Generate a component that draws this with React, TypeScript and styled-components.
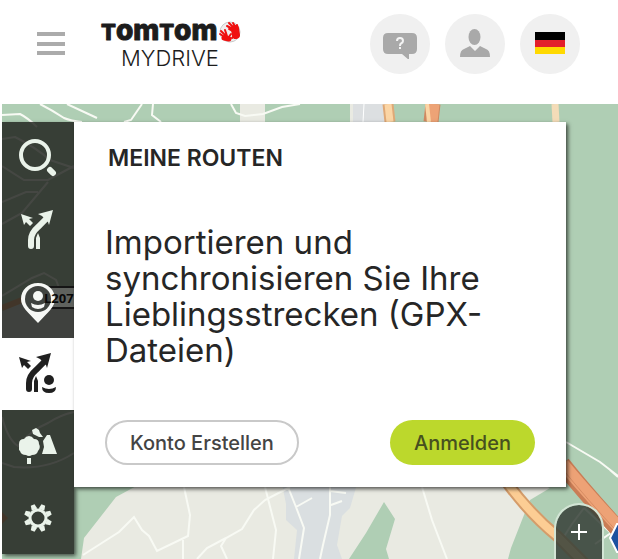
import React from "react";
import styled, { createGlobalStyle } from "styled-components";

const Global = createGlobalStyle`
  *, *::before, *::after { box-sizing: border-box; }
  body { margin: 0; background: #fff; font-family: Inter, "Open Sans", sans-serif; color: #262626; }
  button { font: inherit; color: inherit; border: 0; padding: 0; margin: 0; cursor: pointer; background: none; }
`;

const Page = styled.div`
  min-height: 100vh;
  display: flex;
  flex-direction: column;
`;

const Header = styled.header`
  height: 104px;
  padding: 14px 38px 0 36px;
  display: flex;
  align-items: flex-start;
`;

const MenuButton = styled.button`
  width: 30px;
  height: 60px;
  display: grid;
  place-items: center;
`;

const Brand = styled.a`
  margin-left: 34px;
  padding-top: 6px;
  display: flex;
  flex-direction: column;
  color: #1c1c1c;
  text-decoration: none;
`;

const Wordmark = styled.svg`
  display: block;
  overflow: visible;
  font-weight: 800;
`;

const Product = styled.span`
  padding-left: 21px;
  font-size: 22px;
  line-height: 28px;
  font-weight: 300;
`;

const HeaderActions = styled.div`
  margin-left: auto;
  display: flex;
  gap: 15px;
`;

const RoundButton = styled.button`
  width: 60px;
  height: 60px;
  border-radius: 50%;
  background: #f0f0f0;
  display: grid;
  place-items: center;
`;

const MapArea = styled.main`
  position: relative;
  flex: 1;
  margin-left: 2px;
  padding: 18px 52px 4px 0;
  overflow: hidden;
  display: flex;
  align-items: flex-start;
  background: #afceb4;
`;

const MapDrawing = styled.svg`
  position: absolute;
  inset: 0;
  width: 100%;
  height: 100%;
`;

const Sidebar = styled.nav`
  position: relative;
  flex: none;
  width: 72px;
  display: flex;
  flex-direction: column;
  background: rgba(28, 31, 26, 0.82);
  box-shadow: 2px 2px 4px rgba(0, 0, 0, 0.6);
`;

const SideItem = styled.button<{ $active?: boolean }>`
  position: relative;
  height: 72px;
  display: grid;
  place-items: center;
  color: ${(p) => (p.$active ? "#202020" : "#eaf3ea")};
  background: ${(p) => (p.$active ? "#fff" : "transparent")};
`;

const RoadLabel = styled.svg`
  position: absolute;
  right: 0;
  top: 20px;
  overflow: visible;
  font-family: "Open Sans", sans-serif;
`;

const SideIcon = styled.svg`
  position: relative;
  display: block;
`;

const Panel = styled.section`
  position: relative;
  flex: 1;
  min-width: 0;
  padding: 22px 31px;
  background: #fff;
  box-shadow: 2px 2px 4px rgba(0, 0, 0, 0.65);
`;

const Title = styled.h1`
  margin: 0 0 52px 3px;
  font-size: 23px;
  line-height: 28px;
  font-weight: 600;
`;

const Message = styled.p`
  margin: 0;
  font-size: 33px;
  line-height: 36px;
`;

const Actions = styled.div`
  margin-top: 52px;
  display: flex;
  justify-content: space-between;
`;

const PillButton = styled.button<{ $primary?: boolean }>`
  height: 45px;
  padding: 0 ${(p) => (p.$primary ? 24 : 23)}px;
  border-radius: 23px;
  border: ${(p) => (p.$primary ? "0" : "2px solid #c9c9c9")};
  background: ${(p) => (p.$primary ? "#bcd82c" : "#fff")};
  color: ${(p) => (p.$primary ? "#46501f" : "#444")};
  font-size: 20px;
  font-weight: 500;
  white-space: nowrap;
`;

const ZoomIn = styled.button`
  position: absolute;
  right: 14px;
  bottom: 0;
  width: 50px;
  height: 56px;
  border: 2px solid #d3e5d5;
  border-bottom: 0;
  border-radius: 25px 25px 0 0;
  background: rgba(55, 64, 56, 0.86);
  background-clip: padding-box;
  display: grid;
  place-items: center;
`;

function RouteArrows() {
  return (
    <g fill="currentColor">
      <path d="M10 36V30Q10 23 17 17L25 9" fill="none" stroke="currentColor" strokeWidth="6" strokeLinecap="round" />
      <path d="M32 0L17 4L21 6L27 12L28 15Z" />
      <path d="M0 4L12 8L8 9L12 13L9 16L5 12L3 15Z" />
      <path d="M15 39V28L17 23L19 28V39Z" />
    </g>
  );
}

const gearTeeth = [22.5, 67.5, 112.5, 157.5, 202.5, 247.5, 292.5, 337.5];

function BaseMap() {
  return (
    <MapDrawing viewBox="2 104 616 455" preserveAspectRatio="xMinYMin slice" aria-hidden="true">
      <rect x="2" y="104" width="616" height="455" fill="#afceb4" />
      <path d="M240 104H265V122H240ZM350 104H390V122H350Z" fill="#e9eae2" />
      <path d="M353 104H385L388 122H353Z" fill="#dcdfe1" />
      <path d="M364 104L363 122" stroke="#fff" fill="none" />
      <path d="M81 559L84 538L116 497L140 484H540L550 488L530 500L522 520L511 548L508 559Z" fill="#e9eae2" />
      <path d="M282 484H357L350 508L342 516L337 545L342 559H294L297 530L286 520V504Z" fill="#dadfe1" />
      <path d="M349 559L366 533L384 502L395 519L386 549L389 559Z" fill="#afceb4" />
      <g fill="none" stroke="#f8faf4" strokeWidth="2">
        <path d="M2 115L20 114Q28 118 37 127M40 104Q52 110 64 118Q71 121 82 122M67 104L97 118M142 104L131 120L124 122M153 104L152 115L161 122M231 104L236 113L245 116L263 114L282 107L300 104" />
        <path d="M83 555L119 532L134 517L142 530L149 536L157 551L188 536L190 515L184 487M183 540V559M197 559L207 548L226 538L242 529L254 510L265 500L290 487M226 538L221 546L227 559M265 487L276 530L273 559M288 487L296 507L304 528L299 559M296 507L312 498M330 487L330 515L323 545L320 559M330 491L346 493M331 505L342 501M422 487L432 520L447 559" />
        <path d="M566 442L600 462L618 476M610 470L618 477M595 544L618 528M584 508L610 532M584 508L572 524L563 538" />
      </g>
      <g fill="none" stroke="#fff" strokeWidth="2">
        <path d="M2 139L15 137Q35 147 50 160L74 168M2 166L24 180H48L74 166M2 202L26 192H38M2 224L22 213L48 182M2 296L32 278L44 273L56 280L61 293M2 417Q8 440 18 446Q31 430 48 423Q60 415 74 412M2 463L14 467Q48 470 74 453" />
      </g>
      <path d="M2 311L38 295L74 295V338H2Z" fill="#dddfe1" />
      <path d="M2 308L27 298L47 291" stroke="#e79c6d" strokeWidth="6" fill="none" />
      <path d="M2 512L8 518L2 524Z" fill="#e79c6d" />
      <path d="M388 104L390 122" stroke="#dfa977" strokeWidth="11" />
      <path d="M388 104L390 122" stroke="#fbd5a5" strokeWidth="7" />
      <path d="M433 104L431 122" stroke="#cf8961" strokeWidth="15" />
      <path d="M434 104L432 122" stroke="#eda376" strokeWidth="11" />
      <path d="M427 104L429 122" stroke="#fbd5a5" strokeWidth="4" />
      <path d="M555 104L556 122" stroke="#f4dcb8" strokeWidth="7" />
      <g fill="none">
        <path d="M505 480Q530 514 557 536L584 563" stroke="#d49c6a" strokeWidth="12" />
        <path d="M505 480Q530 514 557 536L584 563" stroke="#fccd94" strokeWidth="8" />
        <path d="M562 464Q586 494 628 540" stroke="#c97d56" strokeWidth="17" />
        <path d="M563 464Q587 493 628 537" stroke="#eda276" strokeWidth="12" />
        <path d="M561 467Q585 497 622 537" stroke="#d78c63" strokeWidth="1" />
      </g>
      <path d="M610 538L617 524H637L643 538L637 552H617Z" fill="#1c51a0" stroke="#fff" strokeWidth="2" />
    </MapDrawing>
  );
}

export default function App() {
  return (
    <Page>
      <Global />
      <Header>
        <MenuButton aria-label="Menü">
          <svg width="28" height="24" viewBox="0 0 28 24" fill="#ababab">
            <path d="M0 0H28V4H0ZM0 10H28V14H0ZM0 19H28V23H0Z" />
          </svg>
        </MenuButton>
        <Brand href="#">
          <Wordmark width="142" height="24" viewBox="0 0 142 24">
            <g fill="currentColor" stroke="currentColor" strokeWidth="1" strokeLinejoin="round">
              <text x="1" y="20" fontSize="22">T<tspan fontSize="28">om</tspan>T<tspan fontSize="28">om</tspan></text>
            </g>
            <circle cx="130" cy="12" r="10" fill="#efefef" stroke="#c9c9c9" />
            <g fill="none" stroke="#f01010" strokeLinecap="round">
              <path d="M120 14L126 18M121 11L127 17M125 10L127 16M131 14L128 18" strokeWidth="2" />
              <path d="M124 18L129 19" strokeWidth="5" />
              <path d="M135 9L136 15" strokeWidth="8" />
              <path d="M133 9L127 6M134 8L129 3M136 8L133 3M138 9L137 5M134 12L129 9M134 16L132 18" strokeWidth="2" />
            </g>
          </Wordmark>
          <Product>MYDRIVE</Product>
        </Brand>
        <HeaderActions>
          <RoundButton aria-label="Hilfe">
            <svg width="36" height="30" viewBox="0 0 36 30">
              <path d="M6 4H30Q35 4 35 9V20Q35 25 30 25H27V31L20 25H6Q1 25 1 20V9Q1 4 6 4Z" fill="#a9a9a9" />
              <path d="M15 12Q15 9 18 9Q21 9 21 12Q21 13.500 19 14.500Q18 15 18 17" fill="none" stroke="#f4f4f4" strokeWidth="2" />
              <rect x="17" y="18" width="2" height="2" fill="#f4f4f4" />
            </svg>
          </RoundButton>
          <RoundButton aria-label="Konto">
            <svg width="30" height="30" viewBox="0 0 30 30" fill="#a9a9a9">
              <ellipse cx="14.500" cy="8" rx="6" ry="8" />
              <path d="M0 28Q0 21 4 20L10 17L15 22L20 17L26 20Q30 21 30 28Z" />
            </svg>
          </RoundButton>
          <RoundButton aria-label="Deutsch">
            <svg width="30" height="24" viewBox="0 0 30 24">
              <path d="M0 0H30V8H0Z" fill="#000" />
              <path d="M0 8H30V15H0Z" fill="#e3202b" />
              <path d="M0 15H30V22H0Z" fill="#ffd900" />
            </svg>
          </RoundButton>
        </HeaderActions>
      </Header>
      <MapArea>
        <BaseMap />
        <Sidebar aria-label="Karte">
          <SideItem aria-label="Suchen">
            <SideIcon width="38" height="38" viewBox="0 0 38 38" fill="none" stroke="currentColor">
              <circle cx="16" cy="16" r="14" strokeWidth="4" />
              <path d="M31 31L34 34" strokeWidth="6" strokeLinecap="round" />
            </SideIcon>
          </SideItem>
          <SideItem aria-label="Route planen">
            <SideIcon width="34" height="40" viewBox="0 0 34 40">
              <RouteArrows />
            </SideIcon>
          </SideItem>
          <SideItem aria-label="Meine Orte">
            <RoadLabel width="38" height="26" viewBox="0 0 38 26">
              <path d="M38 1H3Q1 1 1 4V19Q1 22 4 22H38" fill="#5f625e" stroke="#151515" strokeWidth="2" />
            </RoadLabel>
            <SideIcon width="36" height="42" viewBox="0 0 36 42">
              <path d="M18 2C8 2 1 9 1 18C1 26 8 31 18 42C28 31 35 26 35 18C35 9 28 2 18 2Z" fill="#f6f8f5" />
              <circle cx="18" cy="18" r="13" fill="#3f433f" />
              <circle cx="18" cy="15" r="5" fill="#f6f8f5" />
              <path d="M11 22Q18 26 25 22L24 26Q18 30 12 26Z" fill="#f6f8f5" />
            </SideIcon>
            <RoadLabel width="38" height="26" viewBox="0 0 38 26">
              <text x="8" y="17" fontSize="13" fontWeight="700" fill="#090909">L207</text>
            </RoadLabel>
          </SideItem>
          <SideItem $active aria-label="Meine Routen" aria-current="page">
            <SideIcon width="38" height="42" viewBox="0 0 38 42">
              <RouteArrows />
              <circle cx="30" cy="27" r="5" fill="currentColor" />
              <path d="M23 34Q30 38 37 34Q37 40 30 40Q23 40 23 34Z" fill="currentColor" />
            </SideIcon>
          </SideItem>
          <SideItem aria-label="Entdecken">
            <SideIcon width="38" height="38" viewBox="0 0 38 38" fill="currentColor">
              <path d="M10 9Q13 9 15 12Q20 12 20 17Q22 21 19 24Q18 28 13 28Q10 30 7 28Q2 28 1 24Q-2 21 0 17Q0 12 5 12Q7 9 10 9Z" />
              <path d="M8 31H12V37H8Z" />
              <path d="M13 3L17 1L20 3L21 6L24 10H20L14 7Z" />
              <path d="M28 8H31L38 27H23L25 20L24 14Z" />
            </SideIcon>
          </SideItem>
          <SideItem aria-label="Einstellungen">
            <SideIcon width="28" height="28" viewBox="0 0 28 28" fill="none" stroke="currentColor">
              <circle cx="14" cy="14" r="8" strokeWidth="3" />
              {gearTeeth.map((angle) => (
                <path key={angle} d="M11 5L12 0H16L17 5Z" fill="currentColor" stroke="none" transform={`rotate(${angle} 14 14)`} />
              ))}
            </SideIcon>
          </SideItem>
        </Sidebar>
        <Panel>
          <Title>MEINE ROUTEN</Title>
          <Message>Importieren und synchronisieren Sie Ihre Lieblingsstrecken (GPX-Dateien)</Message>
          <Actions>
            <PillButton>Konto Erstellen</PillButton>
            <PillButton $primary>Anmelden</PillButton>
          </Actions>
        </Panel>
        <ZoomIn aria-label="Vergrößern">
          <svg width="16" height="16" viewBox="0 0 16 16" stroke="#fff" strokeWidth="2">
            <path d="M8 0V16M0 8H16" />
          </svg>
        </ZoomIn>
      </MapArea>
    </Page>
  );
}
